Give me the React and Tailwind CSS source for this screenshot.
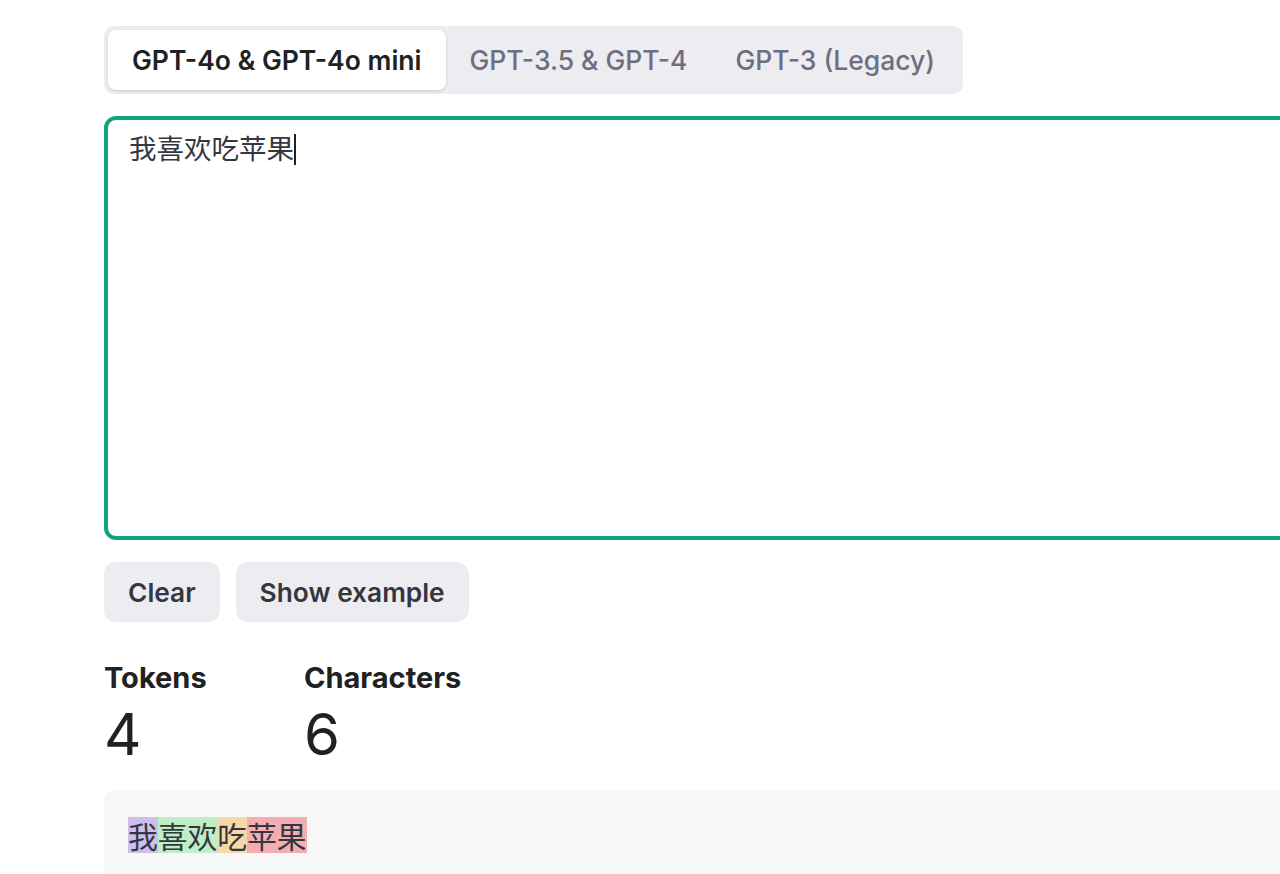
import { useState } from "react";

const tabs = ["GPT-4o & GPT-4o mini", "GPT-3.5 & GPT-4", "GPT-3 (Legacy)"];

const tokens = [
  { text: "我", cls: "bg-[rgba(107,64,216,0.3)]" },
  { text: "喜欢", cls: "bg-[rgba(104,222,122,0.4)]" },
  { text: "吃", cls: "bg-[rgba(244,172,54,0.4)]" },
  { text: "苹果", cls: "bg-[rgba(239,65,70,0.4)]" },
];

const App = () => {
  const [active, setActive] = useState(0);

  return (
    <div className="w-full h-[874px] overflow-hidden bg-white font-['Inter','Noto_Sans_CJK_SC',sans-serif] text-[#202123]">
      <main className="w-[1400px] pl-[104px] pt-[26px]">
        {/* model tabs */}
        <div className="inline-flex p-[4px] rounded-[10px] bg-[#ececf1]">
          {tabs.map((t, i) => (
            <button
              key={t}
              onClick={() => setActive(i)}
              className={
                i === active
                  ? "h-[60px] pt-[2px] px-[24px] rounded-[8px] bg-white shadow-[0_1px_3px_rgba(0,0,0,0.15)] text-[26.5px] font-semibold text-[#202123]"
                  : "h-[60px] pt-[2px] px-[24px] rounded-[8px] text-[26.5px] font-medium text-[#6e6e80]"
              }
            >
              {t}
            </button>
          ))}
        </div>

        {/* input */}
        <div className="mt-[22px] h-[424px] w-[1250px] rounded-[12px] border-[4px] border-[#10a37f] px-[21px] pt-[6px] text-[27.5px] leading-[42px] text-[#353740] font-['Noto_Sans_CJK_SC',sans-serif]">
          <span>我喜欢吃苹果</span>
          <span className="inline-block w-[1.5px] h-[31px] bg-[#202123] align-[-6px]" />
        </div>

        <div className="mt-[22px] flex gap-[16px]">
          <button className="h-[60px] pt-[2px] px-[24px] rounded-[12px] bg-[#ececf1] text-[26.3px] font-semibold text-[#353740]">
            Clear
          </button>
          <button className="h-[60px] pt-[2px] px-[24px] rounded-[12px] bg-[#ececf1] text-[26.3px] font-semibold text-[#353740]">
            Show example
          </button>
        </div>

        {/* stats */}
        <div className="mt-[38px] flex">
          <div className="w-[200px]">
            <div className="text-[29px] font-bold leading-[36px]">Tokens</div>
            <div className="text-[58px] leading-[72px] font-normal mt-[2px]">4</div>
          </div>
          <div>
            <div className="text-[29px] font-bold leading-[36px]">Characters</div>
            <div className="text-[58px] leading-[72px] font-normal mt-[2px]">6</div>
          </div>
        </div>

        {/* token view */}
        <div className="mt-[20px] w-[1250px] h-[200px] rounded-t-[10px] bg-[#f7f7f8] px-[24px] pt-[27px] text-[29.75px] leading-[36px] text-[#353740] font-['Noto_Sans_CJK_SC',sans-serif]">
          {tokens.map((tk) => (
            <span key={tk.text} className={`inline-block h-[36px] ${tk.cls}`}>
              {tk.text}
            </span>
          ))}
        </div>
      </main>
    </div>
  );
};

export default App;
